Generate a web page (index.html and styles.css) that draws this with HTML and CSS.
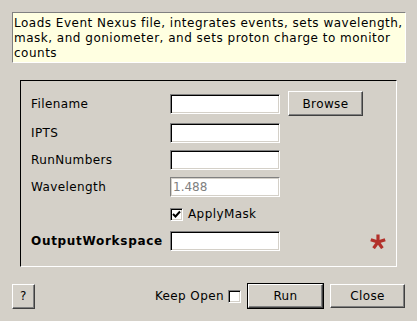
FILE: index.html
```html
<!DOCTYPE html>
<html lang="en">
<head>
<meta charset="UTF-8" />
<title>LoadEventNexus dialog</title>
<link rel="stylesheet" href="styles.css">
</head>
<body>
<div class="dialog">
  <div class="summary">
    Loads Event Nexus file, integrates events, sets wavelength,<br>
    mask, and goniometer, and sets proton charge to monitor<br>
    counts
  </div>

  <div class="group">
    <label class="prop">Filename</label>
    <input class="field" type="text" />
    <button class="btn btn-browse" type="button">Browse</button>

    <label class="prop">IPTS</label>
    <input class="field" type="text" />
    <span></span>

    <label class="prop">RunNumbers</label>
    <input class="field" type="text" />
    <span></span>

    <label class="prop">Wavelength</label>
    <input class="field field-disabled" type="text" value="1.488" disabled />
    <span></span>

    <span></span>
    <label class="check-row">
      <span class="checkbox">
        <svg width="9" height="9" viewBox="0 0 9 9"><path d="M1 4 L3.5 6.5 L8 1.5" fill="none" stroke="#000" stroke-width="2"/></svg>
      </span>
      ApplyMask
    </label>
    <span></span>

    <label class="prop prop-bold">OutputWorkspace</label>
    <input class="field" type="text" />
    <span class="required">
      <svg width="16" height="15" viewBox="0 0 16 15">
        <g stroke="#b2302a" stroke-width="3.2" stroke-linecap="butt">
          <line x1="8" y1="8" x2="8" y2="0.5"/>
          <line x1="8" y1="8" x2="0.8" y2="5.7"/>
          <line x1="8" y1="8" x2="15.2" y2="5.7"/>
          <line x1="8" y1="8" x2="3.6" y2="14.2"/>
          <line x1="8" y1="8" x2="12.4" y2="14.2"/>
        </g>
      </svg>
    </span>
  </div>

  <div class="footer">
    <button class="btn btn-help" type="button">?</button>
    <label class="keep-open">
      Keep Open
      <span class="checkbox"></span>
    </label>
    <span class="default-wrap"><button class="btn btn-run" type="button">Run</button></span>
    <button class="btn btn-close" type="button">Close</button>
  </div>
</div>
</body>
</html>
```

FILE: styles.css
```css
/* classic Qt dialog look */
body {
  margin: 0;
  background: #d4d0c8;
  font-family: 'DejaVu Sans', sans-serif;
  font-size: 12px;
  letter-spacing: 0.4px;
  color: #000;
}
.dialog {
  width: 417px;
  height: 321px;
  padding: 12px 0 0 0;
  box-sizing: border-box;
}
.summary {
  margin: 0 11px 0 12px;
  padding: 3px 0 1px 1px;
  letter-spacing: 0.5px;
  line-height: 15px;
  white-space: nowrap;
  overflow: hidden;
  background: #ffffe1;
  border: 1px solid;
  border-color: #808080 #ffffff #ffffff #808080;
  height: 45px;
}
.group {
  margin: 17px 20px 0 20px;
  border: 1px solid;
  border-color: #000 #fff #fff #000;
  padding: 10px 10px 16px 10px;
  height: 159px;
  box-sizing: content-box;
  display: grid;
  grid-template-columns: 131px 110px 1fr;
  grid-template-rows: 25px 20px 20px 20px 20px 20px;
  column-gap: 8px;
  row-gap: 7px;
  align-items: center;
}
.prop {
  white-space: nowrap;
}
.prop-bold {
  font-weight: bold;
  letter-spacing: 0.7px;
}
.field {
  width: 110px;
  height: 20px;
  box-sizing: border-box;
  margin: 0;
  padding: 0 2px;
  font-family: 'DejaVu Sans', sans-serif;
  font-size: 12px;
  background: #fff;
  border: 1px solid;
  border-color: #808080 #fff #fff #808080;
  box-shadow: inset 1px 1px 0 #000, inset -1px -1px 0 #d4d0c8;
  outline: none;
}
.field-disabled {
  color: #808080;
  box-shadow: inset 1px 1px 0 #d4d0c8, inset -1px -1px 0 #d4d0c8;
}
.btn {
  font-family: 'DejaVu Sans', sans-serif;
  font-size: 12px;
  letter-spacing: 0.4px;
  color: #000;
  background: #d4d0c8;
  border: 1px solid;
  border-color: #fff #404040 #404040 #fff;
  box-shadow: inset -1px -1px 0 #808080;
  padding: 0;
  margin: 0;
  cursor: pointer;
}
.btn-browse {
  width: 75px;
  height: 25px;
  justify-self: start;
}
.check-row {
  display: flex;
  align-items: center;
  gap: 5px;
  white-space: nowrap;
}
.checkbox {
  width: 13px;
  height: 13px;
  box-sizing: border-box;
  background: #fff;
  border: 1px solid;
  border-color: #808080 #fff #fff #808080;
  box-shadow: inset 1px 1px 0 #000, inset -1px -1px 0 #d4d0c8;
  display: flex;
  align-items: center;
  justify-content: center;
}
.required {
  justify-self: end;
  display: flex;
  padding-top: 1px;
}
.footer {
  display: flex;
  align-items: center;
  margin-top: 16px;
  padding: 0 12px;
  height: 26px;
}
.btn-help {
  width: 23px;
  height: 25px;
}
.keep-open {
  margin-left: auto;
  display: flex;
  align-items: center;
  gap: 4px;
  margin-right: 6px;
}
.default-wrap {
  border: 1px solid #000;
  display: flex;
}
.btn-run {
  width: 75px;
  height: 24px;
}
.btn-close {
  width: 75px;
  height: 24px;
  margin-left: 6px;
}
```
